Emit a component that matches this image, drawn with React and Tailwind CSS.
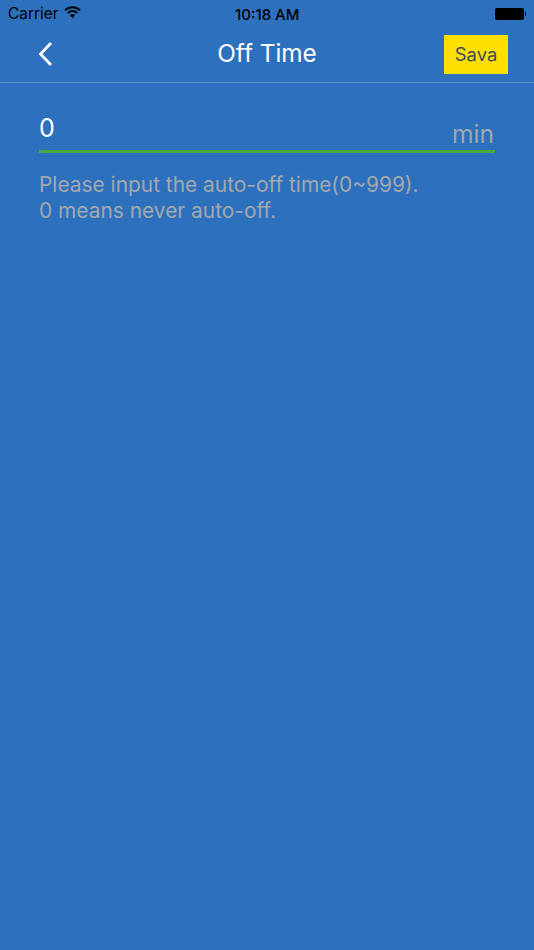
import React from "react";

function Wifi() {
  return (
    <svg width="17" height="12" viewBox="0 0 17 12" className="ml-[6px] mt-[-3px]">
      <path d="M1 4.4 A10.6 10.6 0 0 1 16 4.4" fill="none" stroke="#000" strokeWidth="1.9" />
      <path d="M3.7 7 A6.8 6.8 0 0 1 13.3 7" fill="none" stroke="#000" strokeWidth="1.9" />
      <path d="M5.9 9.3 A3.7 3.7 0 0 1 11.1 9.3 L8.5 12 Z" fill="#000" />
    </svg>
  );
}

function Battery() {
  return (
    <div className="flex items-center mt-[-1px]">
      <div className="w-[29px] h-[12px] rounded-[2px] bg-black" />
      <div className="w-[1.5px] h-[4px] bg-black ml-[0.5px]" />
    </div>
  );
}

export default function App() {
  return (
    <div className="w-[534px] h-[950px] overflow-hidden bg-[#2d70bd] font-['Inter','Liberation_Sans',sans-serif]">
      {/* status bar */}
      <div className="relative h-[28px] flex items-center justify-between pl-[8px] pr-[8px] text-[15.4px] text-black">
        <div className="flex items-center">
          <span>Carrier</span>
          <Wifi />
        </div>
        <span className="absolute left-[235px] top-[4px] text-[15px] font-medium">10:18 AM</span>
        <Battery />
      </div>

      {/* nav bar */}
      <div className="relative h-[55px] border-b border-[#5b8fcb] flex items-center justify-center">
        <button className="absolute left-[37px] top-[12px]">
          <svg width="17" height="28" viewBox="0 0 17 28">
            <path d="M14 3 L3.5 14 L14 25" fill="none" stroke="#fff" strokeWidth="2.8" />
          </svg>
        </button>
        <h1 className="text-[24.3px] text-white font-normal mt-[-3px]">Off Time</h1>
        <button className="absolute right-[26px] top-[7px] w-[64px] h-[39px] bg-[#ffdf00] text-[#3d4a60] text-[18.4px]">
          Sava
        </button>
      </div>

      {/* input */}
      <div className="px-[39px] pt-[27px]">
        <div className="h-[43px] flex justify-between border-b-[3px] border-[#45ac45]">
          <span className="text-white text-[25px] leading-[36px]">0</span>
          <span className="text-[#a3a8ad] text-[24.6px] leading-[36px] mt-[6px] mr-[1px]">min</span>
        </div>
        <p className="mt-[19px] text-[#a3a8ad] text-[20.9px] leading-[26px]">
          Please input the auto-off time(0~999).
          <br />
          0 means never auto-off.
        </p>
      </div>
    </div>
  );
}
